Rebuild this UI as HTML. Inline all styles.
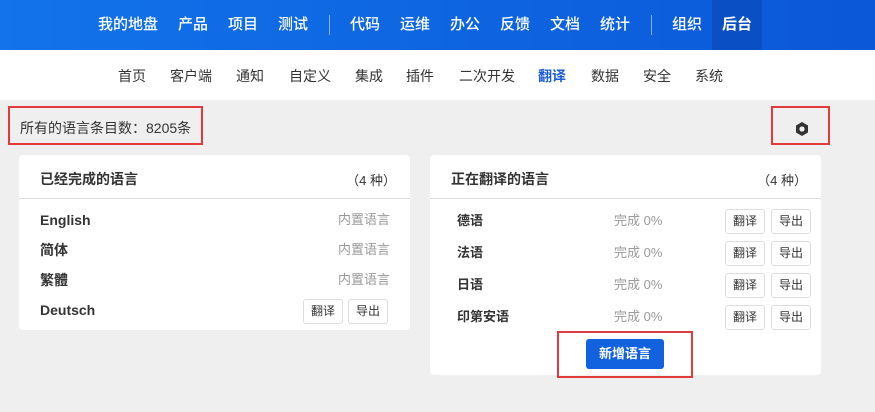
<!DOCTYPE html>
<html><head><meta charset="utf-8"><style>
*{margin:0;padding:0;box-sizing:border-box}
body{width:875px;height:412px;background:#efefef;font-family:"Liberation Sans","Noto Sans CJK SC",sans-serif;position:relative;overflow:hidden;color:#333}
.a{position:absolute;white-space:nowrap}
.top{position:absolute;left:0;top:0;width:875px;height:50px;background:linear-gradient(90deg,#1273ea,#0b58d8)}
.tn{position:absolute;top:14px;font-size:15px;font-weight:500;color:#fff;line-height:22px}
.sep{position:absolute;top:15px;width:1px;height:20px;background:rgba(255,255,255,.5)}
.sub{position:absolute;left:0;top:50px;width:875px;height:50px;background:#fff}
.sn{position:absolute;top:16px;font-size:14px;color:#333;line-height:20px}
.card{position:absolute;background:#fff;border-radius:4px}
.hd{position:absolute;left:0;top:0;right:0;height:44px;border-bottom:1px solid #ddd}
.ht{position:absolute;left:21px;top:14px;font-size:14px;font-weight:bold;color:#333}
.hc{position:absolute;right:14px;top:15px;font-size:13px;color:#333}
.nm{position:absolute;font-size:14px;font-weight:bold;color:#333;line-height:20px}
.gr{position:absolute;font-size:13px;color:#999;line-height:20px}
.btn{position:absolute;width:40px;height:25px;border:1px solid #ddd;border-radius:3px;font-size:12px;color:#333;text-align:center;line-height:23px;background:#fff}
.red{position:absolute;border:2px solid #e33b3b}
</style></head><body>
<div class="top"></div>
<div class="a" style="left:712px;top:0;width:50px;height:50px;background:#0a4fc4"></div>
<span class="tn" style="left:98px">我的地盘</span>
<span class="tn" style="left:178px">产品</span>
<span class="tn" style="left:228px">项目</span>
<span class="tn" style="left:278px">测试</span>
<div class="sep" style="left:329px"></div>
<span class="tn" style="left:350px">代码</span>
<span class="tn" style="left:400px">运维</span>
<span class="tn" style="left:450px">办公</span>
<span class="tn" style="left:500px">反馈</span>
<span class="tn" style="left:550px">文档</span>
<span class="tn" style="left:600px">统计</span>
<div class="sep" style="left:651px"></div>
<span class="tn" style="left:672px">组织</span>
<span class="tn" style="left:722px;font-weight:bold">后台</span>
<div class="sub">
<span class="sn" style="left:118px">首页</span>
<span class="sn" style="left:170px">客户端</span>
<span class="sn" style="left:236px">通知</span>
<span class="sn" style="left:289px">自定义</span>
<span class="sn" style="left:355px">集成</span>
<span class="sn" style="left:406px">插件</span>
<span class="sn" style="left:459px">二次开发</span>
<span class="sn" style="left:538px;color:#1a5fd8;font-weight:bold">翻译</span>
<span class="sn" style="left:591px">数据</span>
<span class="sn" style="left:643px">安全</span>
<span class="sn" style="left:695px">系统</span>
</div>
<span class="a" style="left:20px;top:118px;font-size:14px;line-height:20px;color:#333">所有的语言条目数：8205条</span>
<svg class="a" style="left:794px;top:121px" width="16" height="16" viewBox="0 0 16 16"><path d="M8 1l6 3.5v7L8 15 2 11.5v-7z" fill="#333"/><circle cx="8" cy="8" r="2.6" fill="#efefef"/></svg>
<div class="red" style="left:8px;top:106px;width:195px;height:39px"></div>
<div class="red" style="left:771px;top:106px;width:59px;height:39px"></div>

<div class="card" style="left:19px;top:155px;width:391px;height:175px">
<div class="hd"></div><span class="ht">已经完成的语言</span><span class="hc">（4 种）</span>
<span class="nm" style="left:21px;top:55px">English</span><span class="gr" style="right:20px;top:55px">内置语言</span>
<span class="nm" style="left:21px;top:85px">简体</span><span class="gr" style="right:20px;top:85px">内置语言</span>
<span class="nm" style="left:21px;top:115px">繁體</span><span class="gr" style="right:20px;top:115px">内置语言</span>
<span class="nm" style="left:21px;top:145px">Deutsch</span>
<div class="btn" style="left:284px;top:144px">翻译</div><div class="btn" style="left:329px;top:144px">导出</div>
</div>

<div class="card" style="left:430px;top:155px;width:391px;height:220px">
<div class="hd"></div><span class="ht">正在翻译的语言</span><span class="hc">（4 种）</span>
<span class="nm" style="left:27px;top:56px;font-size:13px">德语</span><span class="gr" style="left:184px;top:56px">完成 0%</span>
<div class="btn" style="left:295px;top:54px">翻译</div><div class="btn" style="left:341px;top:54px">导出</div>
<span class="nm" style="left:27px;top:88px;font-size:13px">法语</span><span class="gr" style="left:184px;top:88px">完成 0%</span>
<div class="btn" style="left:295px;top:86px">翻译</div><div class="btn" style="left:341px;top:86px">导出</div>
<span class="nm" style="left:27px;top:120px;font-size:13px">日语</span><span class="gr" style="left:184px;top:120px">完成 0%</span>
<div class="btn" style="left:295px;top:118px">翻译</div><div class="btn" style="left:341px;top:118px">导出</div>
<span class="nm" style="left:27px;top:152px;font-size:13px">印第安语</span><span class="gr" style="left:184px;top:152px">完成 0%</span>
<div class="btn" style="left:295px;top:150px">翻译</div><div class="btn" style="left:341px;top:150px">导出</div>
<div class="a" style="left:156px;top:184px;width:78px;height:30px;background:#1262e0;border-radius:3px;color:#fff;font-size:13px;font-weight:bold;text-align:center;line-height:30px">新增语言</div>
</div>
<div class="red" style="left:557px;top:331px;width:136px;height:47px"></div>
</body></html>
